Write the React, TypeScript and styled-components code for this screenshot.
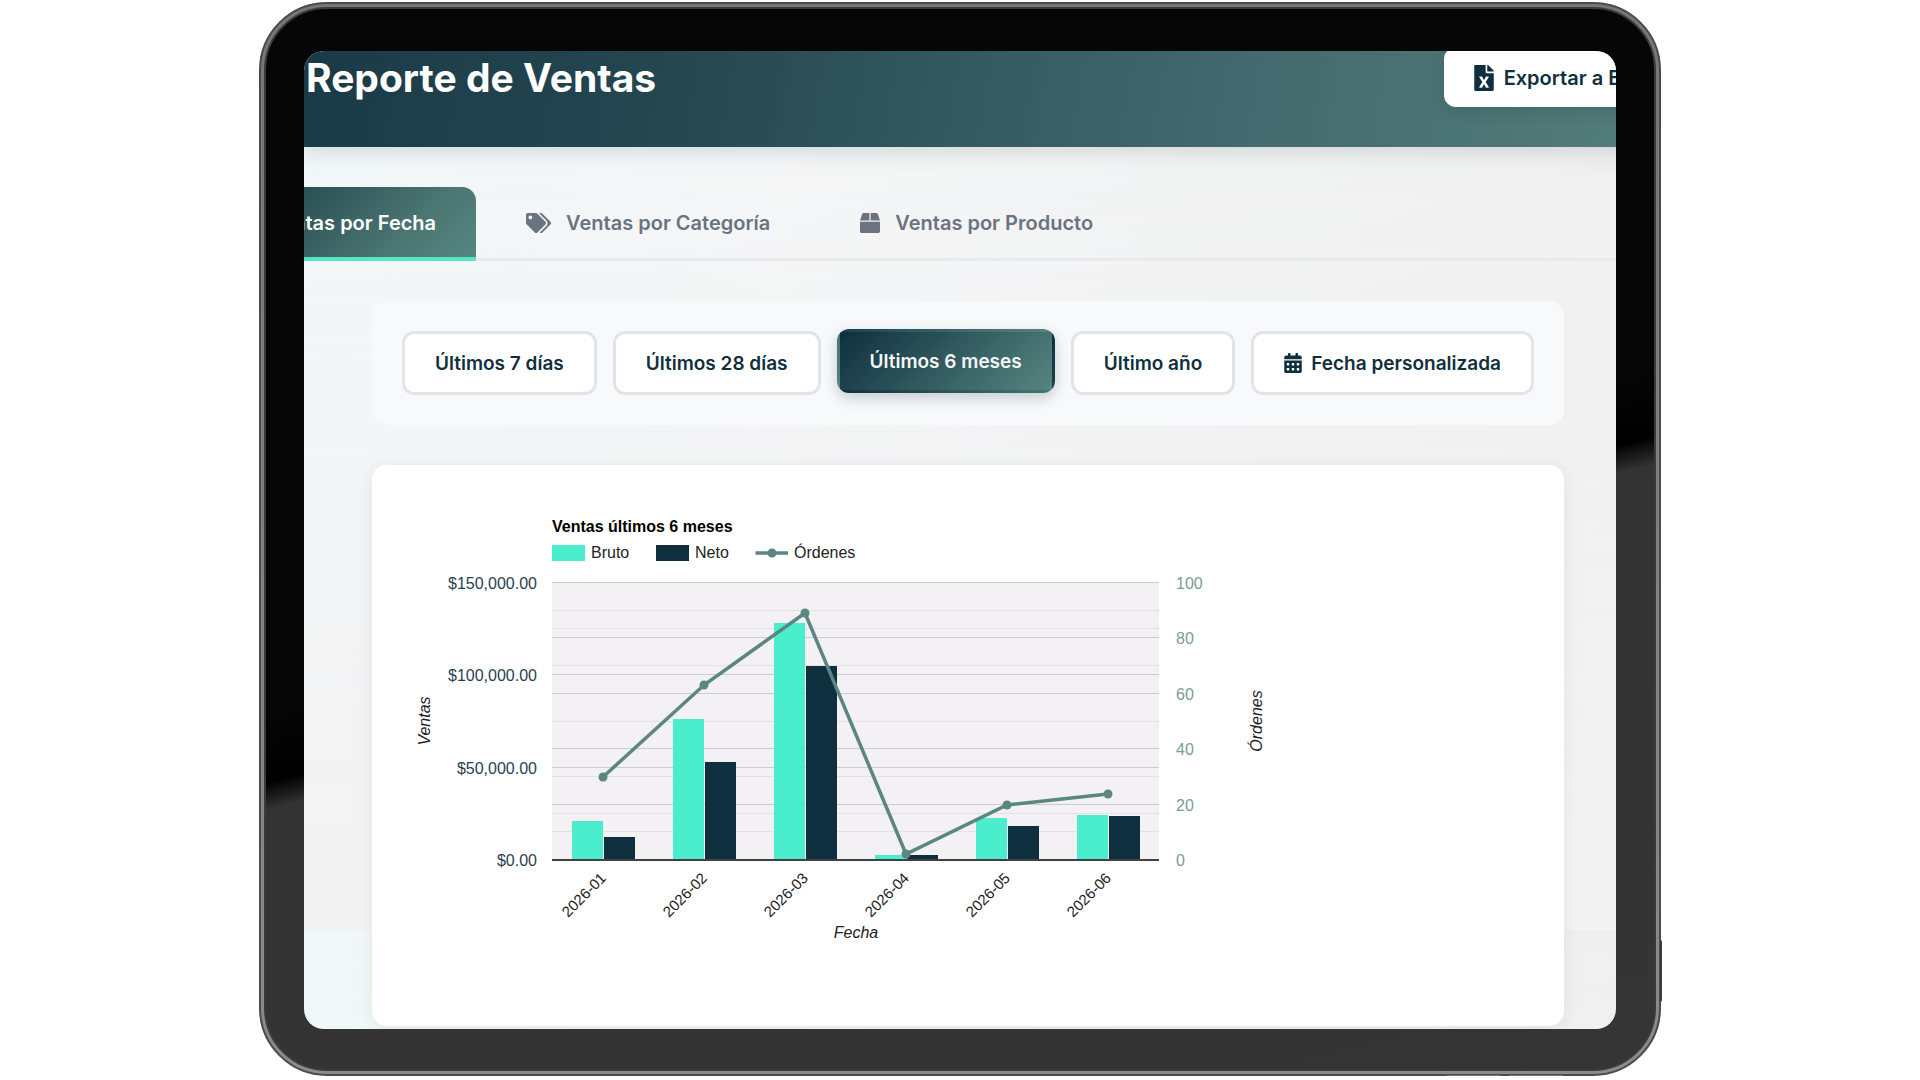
import React from "react";
import styled, { createGlobalStyle, css } from "styled-components";
import { FaBox, FaCalendarAlt, FaCalendarDay, FaFileExcel, FaTags } from "react-icons/fa";

const GlobalStyle = createGlobalStyle`
  *, *::before, *::after { box-sizing: border-box; }
  body {
    margin: 0;
    background: #ffffff;
    font-family: Inter, "Liberation Sans", sans-serif;
    color: #0f2f3e;
  }
  button { font: inherit; cursor: pointer; }
`;

const Stage = styled.div`
  display: flex;
  justify-content: center;
  padding: 2px 16px 0;
`;

const Device = styled.div`
  position: relative;
  width: 100%;
  max-width: 1402px;
  padding: 3px;
  border: 2px solid #4b4b4b;
  border-radius: 68px;
  background: linear-gradient(180deg, #767676 0%, #8a8a8a 100%);
`;

const SideKey = styled.span`
  position: absolute;
  right: -3px;
  bottom: 72px;
  width: 2px;
  height: 62px;
  border-radius: 0 2px 2px 0;
  background: #3a3a3a;
`;

const VolumeKeys = styled.div`
  position: absolute;
  right: 96px;
  bottom: -5px;
  display: flex;
  gap: 8px;
`;

const VolumeKey = styled.span`
  width: 54px;
  height: 4px;
  border-radius: 0 0 4px 4px;
  border-bottom: 1px solid #444444;
  background: #777777;
`;

const Bezel = styled.div`
  padding: 42px 38px 40px;
  border: 2px solid #3a3a3a;
  border-radius: 63px;
  background: linear-gradient(166deg, #060606 0%, #060606 50%, #000000 55%, #333333 57%, #353535 100%);
`;

const Screen = styled.div`
  overflow: hidden;
  border-radius: 20px;
  background:
    linear-gradient(180deg, rgba(244, 243, 244, 0) 0%, #f4f3f4 90%) 0 0 / 100% 879px,
    linear-gradient(100deg, #f1f8f8 0%, #f5f6f7 35%, #eeeeee 100%) 0 0 / 100% 879px;
`;

const Header = styled.header`
  display: flex;
  justify-content: space-between;
  align-items: flex-start;
  height: 96px;
  margin-right: -74px;
  padding-left: 2px;
  background: linear-gradient(100deg, #1a3a48 0%, #24464f 25%, #436a6e 68%, #557f7b 100%);
  box-shadow: 0 4px 20px rgba(15, 47, 62, 0.16);
`;

const Title = styled.h1`
  margin: 3px 0 0;
  font-size: 39px;
  line-height: 48px;
  font-weight: 700;
  color: #ffffff;
  white-space: nowrap;
`;

const ExportButton = styled.button`
  display: flex;
  align-items: center;
  gap: 10px;
  height: 60px;
  margin-top: -4px;
  padding: 1px 30px 0;
  border: 0;
  border-radius: 12px;
  background: #ffffff;
  color: #0f2f3e;
  box-shadow: 0 4px 16px rgba(15, 47, 62, 0.18);
  font-size: 20px;
  font-weight: 600;
  white-space: nowrap;

  svg { width: 20px; height: 26px; }
`;

const Main = styled.main`
  display: flex;
  flex-direction: column;
  padding: 40px 52px 3px 68px;
`;

const Tabs = styled.nav`
  display: flex;
  gap: 10px;
  margin: 0 -52px 40px -179px;
  border-bottom: 3px solid #e9eaee;
`;

const Tab = styled.button<{ $active?: boolean; $iconWidth: number }>`
  display: flex;
  align-items: center;
  gap: 15px;
  height: 74px;
  margin-bottom: -3px;
  padding: 2px 40px 0;
  border: 0;
  border-bottom: 4px solid transparent;
  border-radius: 14px 14px 0 0;
  background: transparent;
  color: #6b7280;
  font-size: 20px;
  font-weight: 600;
  white-space: nowrap;

  svg {
    flex: none;
    width: ${(p) => p.$iconWidth}px;
    height: 20px;
  }

  ${(p) =>
    p.$active &&
    css`
      border-bottom-color: #55e6c4;
      background: linear-gradient(135deg, #12333f 0%, #4c7773 75%, #568680 100%) padding-box;
      color: #ffffff;
    `}
`;

const Filters = styled.section`
  display: flex;
  gap: 16px;
  margin-bottom: 40px;
  padding: 30px;
  border-radius: 15px;
  background: #f8f9fb;
`;

const FilterButton = styled.button<{ $active?: boolean }>`
  display: flex;
  align-items: center;
  justify-content: center;
  gap: 9px;
  height: 64px;
  padding: 0 30px;
  border: 3px solid #e1e5e9;
  border-radius: 12px;
  background: #ffffff;
  color: #0f2f3e;
  font-size: 19px;
  font-weight: 600;
  white-space: nowrap;

  svg { width: 18px; height: 20px; }

  ${(p) =>
    p.$active &&
    css`
      border-color: transparent;
      background: linear-gradient(135deg, #0f2f3e 0%, #568680 100%);
      color: #f3f6f7;
      box-shadow: 0 5px 14px rgba(15, 47, 62, 0.22);
      transform: translateY(-2px);
    `}
`;

const Card = styled.section`
  padding: 40px 40px 41px;
  border-radius: 15px;
  background: #ffffff;
  box-shadow: 0 4px 20px rgba(15, 47, 62, 0.08);
`;

const Chart = styled.svg`
  display: block;
  width: 892px;
  height: 480px;
  font-family: "Liberation Sans", Arial, sans-serif;
  font-size: 16px;
  fill: #222222;
`;

const PLOT = { left: 140, right: 747, top: 78, bottom: 355 };
const TEAL = "#4aeecd";
const NAVY = "#0e2f3e";
const LINE = "#5b8782";

const rows = [
  { month: "2026-01", gross: 21000, net: 12200, orders: 30 },
  { month: "2026-02", gross: 76200, net: 53000, orders: 63 },
  { month: "2026-03", gross: 128400, net: 105300, orders: 89 },
  { month: "2026-04", gross: 2900, net: 2900, orders: 2 },
  { month: "2026-05", gross: 23000, net: 18500, orders: 20 },
  { month: "2026-06", gross: 24600, net: 23900, orders: 24 },
];

const height = PLOT.bottom - PLOT.top;
const step = 101;
const centre = (i: number) => PLOT.left + 51 + i * step;
const money = (v: number) => Math.round(PLOT.bottom - (v / 150000) * height);
const orders = (v: number) => Math.round(PLOT.bottom - (v / 100) * height);

const moneyTicks = [0, 50000, 100000, 150000];
const orderTicks = [0, 20, 40, 60, 80, 100];
const minorLines = [25000, 75000, 125000].map(money).concat([10, 30, 50, 70, 90].map(orders));
const majorLines = moneyTicks.map(money).concat(orderTicks.map(orders));

const formatMoney = (v: number) => "$" + v.toLocaleString("en-US", { minimumFractionDigits: 2 });

function GridLine({ y, color }: { y: number; color: string }) {
  return <rect x={PLOT.left} y={y - 1} width={PLOT.right - PLOT.left} height={1} fill={color} />;
}

function SalesChart() {
  return (
    <Chart viewBox="0 0 892 480" role="img" aria-label="Ventas últimos 6 meses">
      <text x={140} y={27} fontWeight="bold" fill="#000000">Ventas últimos 6 meses</text>
      <rect x={140} y={40} width={33} height={16} fill={TEAL} />
      <text x={179} y={53}>Bruto</text>
      <rect x={244} y={40} width={33} height={16} fill={NAVY} />
      <text x={283} y={53}>Neto</text>
      <path d="M343.5 48H376" stroke={LINE} strokeWidth={3.5} />
      <circle cx={360} cy={48} r={4.5} fill={LINE} />
      <text x={382} y={53}>Órdenes</text>

      <rect x={PLOT.left} y={PLOT.top} width={PLOT.right - PLOT.left} height={height} fill="#f3f1f3" />
      {minorLines.map((y) => <GridLine key={"minor" + y} y={y} color="#e3e2e3" />)}
      {majorLines.map((y, i) => <GridLine key={"major" + i} y={y} color="#cccccc" />)}

      {rows.map((r, i) => (
        <g key={r.month}>
          <rect x={centre(i) - 31} y={money(r.gross)} width={31} height={PLOT.bottom - money(r.gross)} fill={TEAL} />
          <rect x={centre(i) + 1} y={money(r.net)} width={31} height={PLOT.bottom - money(r.net)} fill={NAVY} />
        </g>
      ))}
      <rect x={PLOT.left} y={PLOT.bottom - 1} width={PLOT.right - PLOT.left} height={2} fill="#433f45" />

      <polyline
        points={rows.map((r, i) => `${centre(i)},${orders(r.orders)}`).join(" ")}
        fill="none"
        stroke={LINE}
        strokeWidth={3.5}
      />
      {rows.map((r, i) => <circle key={r.month} cx={centre(i)} cy={orders(r.orders)} r={4.5} fill={LINE} />)}

      {moneyTicks.map((v) => (
        <text key={v} x={125} y={money(v) + 6} textAnchor="end" fill="#2b4150">{formatMoney(v)}</text>
      ))}
      {orderTicks.map((v) => (
        <text key={v} x={764} y={orders(v) + 6} fill="#7b9c98">{v}</text>
      ))}
      {rows.map((r, i) => (
        <text key={r.month} fontSize={15} textAnchor="end" transform={`translate(${centre(i) + 4} 374) rotate(-45)`}>
          {r.month}
        </text>
      ))}
      <text x={444} y={433} textAnchor="middle" fontStyle="italic">Fecha</text>
      <text textAnchor="middle" fontStyle="italic" transform="translate(18 216) rotate(-90)">Ventas</text>
      <text textAnchor="middle" fontStyle="italic" transform="translate(850 216) rotate(-90)">Órdenes</text>
    </Chart>
  );
}

export default function App() {
  return (
    <>
      <GlobalStyle />
      <Stage>
        <Device>
          <SideKey />
          <VolumeKeys>
            <VolumeKey />
            <VolumeKey />
          </VolumeKeys>
          <Bezel>
            <Screen>
              <Header>
                <Title>Reporte de Ventas</Title>
                <ExportButton type="button"><FaFileExcel aria-hidden />Exportar a Excel</ExportButton>
              </Header>
              <Main>
                <Tabs>
                  <Tab type="button" $active $iconWidth={20}><FaCalendarDay aria-hidden />Ventas por Fecha</Tab>
                  <Tab type="button" $iconWidth={25}><FaTags aria-hidden />Ventas por Categoría</Tab>
                  <Tab type="button" $iconWidth={20}><FaBox aria-hidden />Ventas por Producto</Tab>
                </Tabs>
                <Filters>
                  <FilterButton type="button">Últimos 7 días</FilterButton>
                  <FilterButton type="button">Últimos 28 días</FilterButton>
                  <FilterButton type="button" $active>Últimos 6 meses</FilterButton>
                  <FilterButton type="button">Último año</FilterButton>
                  <FilterButton type="button"><FaCalendarAlt aria-hidden />Fecha personalizada</FilterButton>
                </Filters>
                <Card>
                  <SalesChart />
                </Card>
              </Main>
            </Screen>
          </Bezel>
        </Device>
      </Stage>
    </>
  );
}
